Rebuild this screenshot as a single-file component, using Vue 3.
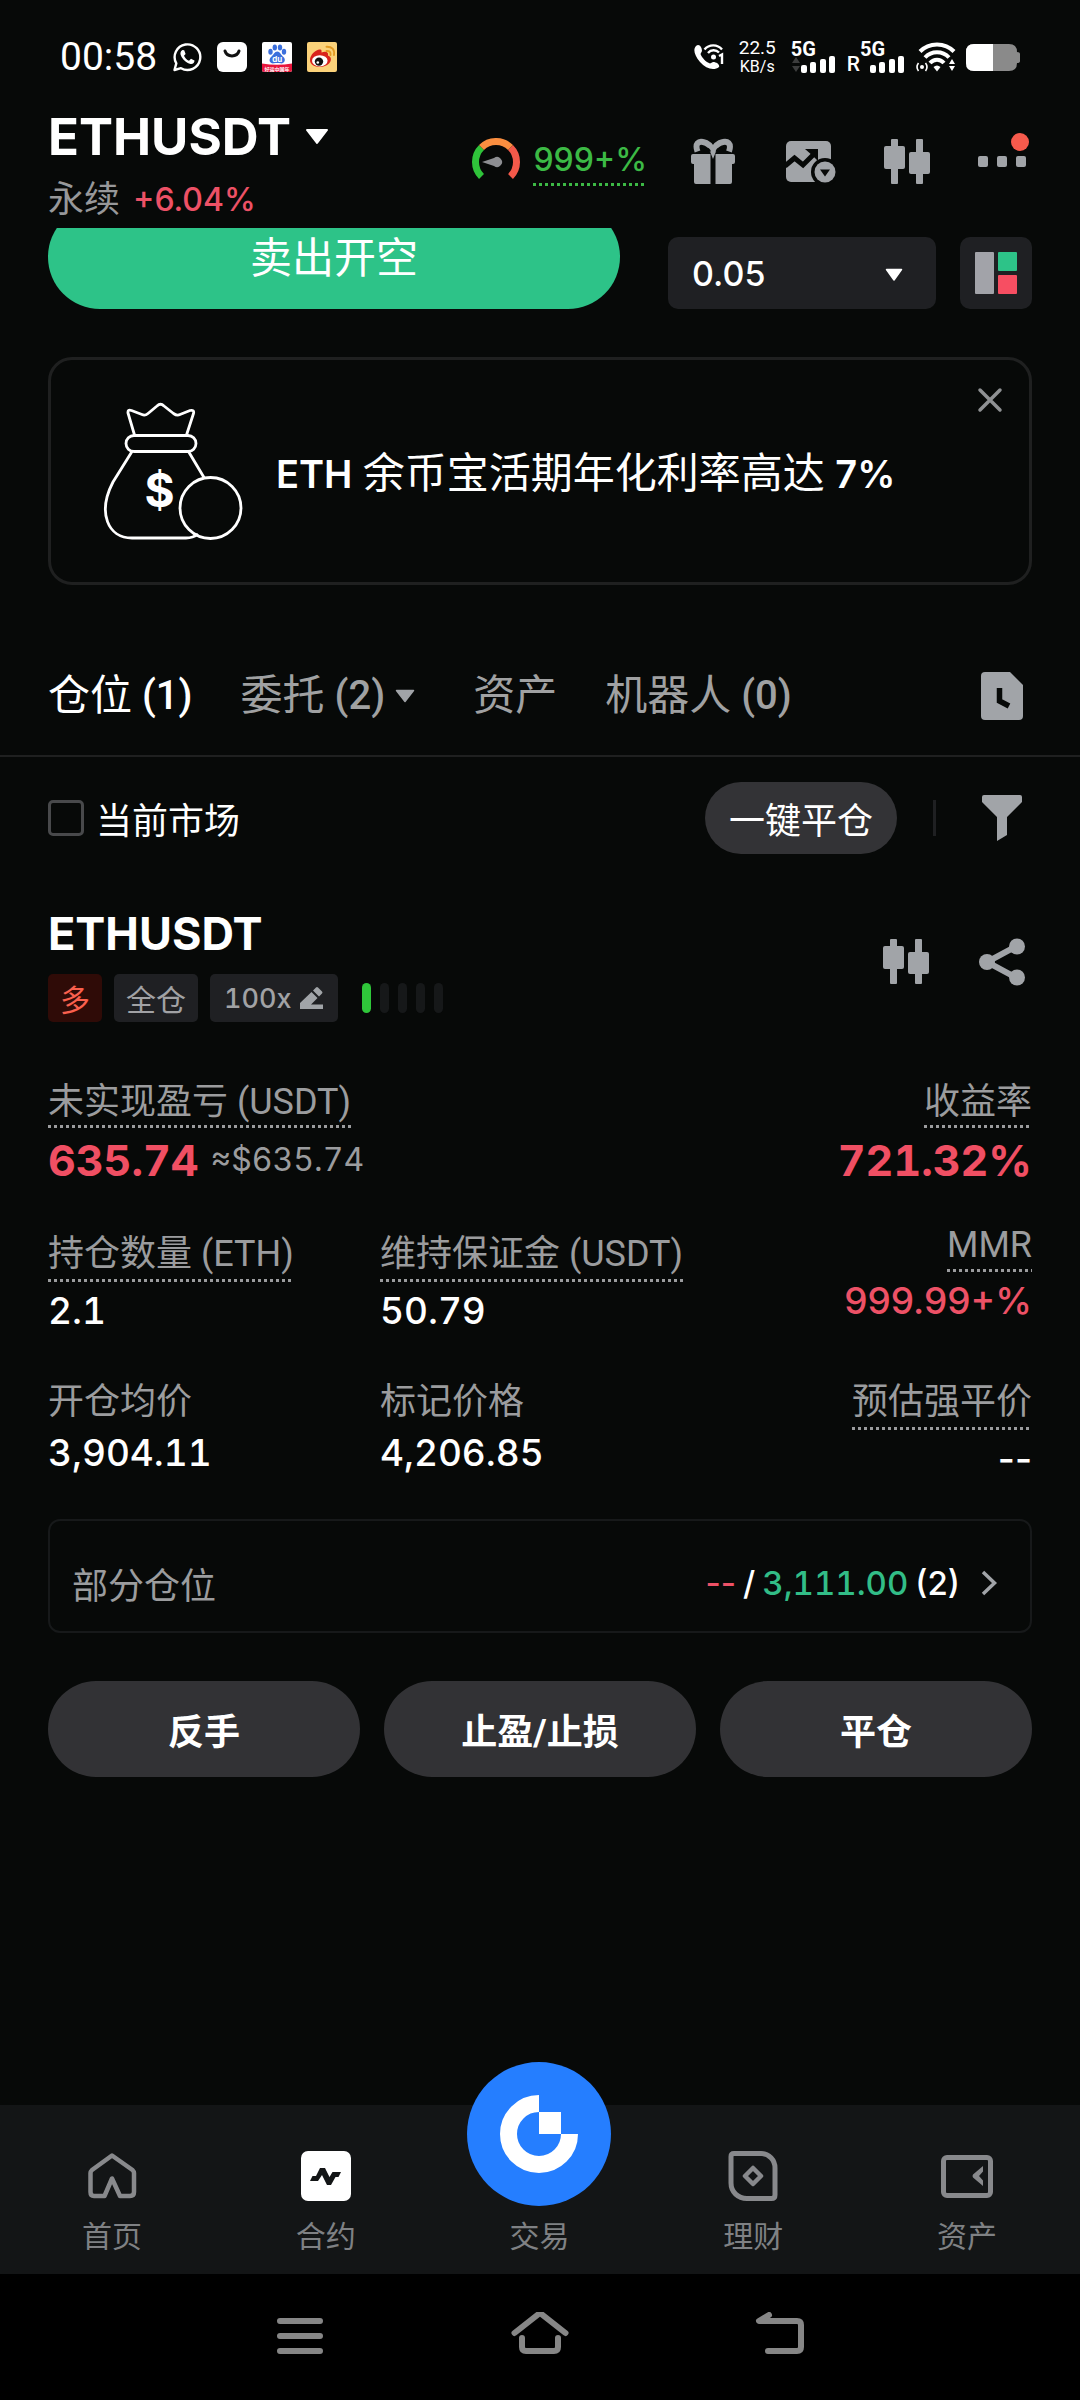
<template>
	<div class="page">
		<!-- 系统状态栏 -->
		<div class="status-bar">
			<div class="status-left">
				<span class="clock">00:58</span>
				<svg class="app-icon" viewBox="0 0 30 30">
					<path d="M2.5 28 L4.3 21.4 A12.8 12.8 0 1 1 9 26.2 Z" fill="none" stroke="#fff" stroke-width="2.4" stroke-linejoin="round" />
					<path d="M10.4 8 C8 9.4 7.8 12 9.6 15 C12 19 15.5 21.4 18.6 22 C21 22.3 22.6 20.6 22.5 18.6 L19 16.8 L17 18.8 C14.8 17.9 12.9 16 12 13.8 L13.6 12 L12.2 8.2 Z" fill="#fff" />
				</svg>
				<svg class="app-icon" viewBox="0 0 30 30">
					<rect width="30" height="30" rx="6" fill="#fff" />
					<path d="M8 9 C10 15.5 20 15.5 22 9" fill="none" stroke="#111" stroke-width="3" stroke-linecap="round" />
				</svg>
				<svg class="app-icon" viewBox="0 0 30 30">
					<rect width="30" height="30" rx="2" fill="#fff" />
					<g fill="#3b6fdc">
						<ellipse cx="8.5" cy="9.8" rx="2.2" ry="3" />
						<ellipse cx="12.8" cy="5.6" rx="2.2" ry="3" />
						<ellipse cx="18" cy="5.6" rx="2.2" ry="3" />
						<ellipse cx="22" cy="9.8" rx="2.2" ry="3" />
						<path d="M15.3 9.5 C18 9.5 19 13 21.5 15 C24.5 18 22 22 18.5 21.3 C16.5 20.9 14 20.9 12 21.3 C8 22 6 18 9 15 C11.5 13 12.5 9.5 15.3 9.5 Z" />
					</g>
					<text x="15.3" y="19.5" class="du">du</text>
					<path d="M0 21.5 Q15 24 30 21.5 V28 Q30 30 28 30 H2 Q0 30 0 28 Z" fill="#e8153c" />
					<text x="15" y="28.6" class="slogan">好运中国年</text>
				</svg>
				<svg class="app-icon" viewBox="0 0 30 30">
					<rect width="30" height="30" rx="2" fill="#fbd27a" />
					<path d="M3 18 C3 12 10 6.5 13.5 7.5 C15 8 14.5 10 14.5 10.5 C18 9 22 9.5 21 13.5 C25 15 24.5 19 22 21.5 C17 27 3 26 3 18 Z" fill="#d9231c" />
					<ellipse cx="12.8" cy="18.8" rx="7.8" ry="5.6" fill="#fff" />
					<circle cx="12" cy="19.6" r="4.2" fill="#111" />
					<circle cx="10.8" cy="20.5" r="1.3" fill="#fff" />
					<path d="M19.5 9 Q24 8.5 23.5 13 M19.5 4.8 Q28 4.5 27 13" fill="none" stroke="#e39a22" stroke-width="1.9" stroke-linecap="round" />
				</svg>
			</div>
			<div class="status-right">
				<svg width="30" height="28" viewBox="0 0 30 28">
					<path d="M2 3 C5 0 8 4 8 8 L6.5 11 C8 15 12 19 16 20.5 L19 19 C23 19 26 22 25 24 C20 28 12 26 6 19 C0 12 -1 6 2 3 Z" fill="#fff" />
					<g fill="none" stroke="#fff" stroke-width="2.4">
						<path d="M10.5 6.5 C15 1 23.5 1 28 6.5" />
						<path d="M14 10 C17 6.5 22 6.5 25 9.5" />
						<path d="M25 13 L28 11.5 V21" />
					</g>
					<circle cx="19.5" cy="14" r="2.5" fill="#fff" />
				</svg>
				<div class="net-speed">
					<span>22.5</span>
					<span class="unit">KB/s</span>
				</div>
				<div v-for="sim in sims" :key="sim.id" class="sim">
					<span v-if="sim.roaming" class="roaming">R</span>
					<div class="sim-signal">
						<span class="sim-type">5G</span>
						<svg width="46" height="17" viewBox="0 0 46 17">
							<path v-if="!sim.roaming" d="M1 7 L5 1 L9 7 Z M1 10 L5 16 L9 10 Z" fill="#3c3d3d" />
							<g fill="#fff">
								<rect x="10" y="9" width="6" height="8" rx="2" />
								<rect x="19" y="6" width="6" height="11" rx="2" />
								<rect x="29" y="3" width="6" height="14" rx="2" />
								<rect x="38" y="0" width="6" height="17" rx="2" />
							</g>
						</svg>
					</div>
				</div>
				<svg width="40" height="30" viewBox="0 0 40 30">
					<g fill="none" stroke="#fff" stroke-width="4">
						<path d="M4 9.5 C13 0 29 0 38 9.5" />
						<path d="M9 15.5 C15.5 8.5 26.5 8.5 33 15.5" />
						<path d="M14 21 C18 16.5 24 16.5 28 21" />
					</g>
					<path d="M17.5 25 Q21 22 24.5 25 L21 29.5 Z" fill="#fff" />
					<circle cx="6" cy="25" r="2" fill="#fff" />
					<path d="M2.5 21 Q-0.5 25 2.5 29 M9.5 21 Q12.5 25 9.5 29" fill="none" stroke="#fff" stroke-width="1.6" />
					<path d="M33 22 L36 17 L39 22 Z M33 24 L36 29 L39 24 Z" fill="#fff" />
				</svg>
				<svg width="54" height="27" viewBox="0 0 54 27">
					<path d="M8 0 H43 Q51 0 51 8 Q54 8 54 10 V17 Q54 19 51 19 Q51 27 43 27 H8 Q0 27 0 19 V8 Q0 0 8 0 Z" fill="#8a8a8a" />
					<path d="M27 0 H8 Q0 0 0 8 V19 Q0 27 8 27 H27 Z" fill="#fff" />
				</svg>
			</div>
		</div>

		<!-- 交易对标题 -->
		<header class="header">
			<div class="pair">
				<h1 class="pair-name">
					ETHUSDT
					<svg width="24" height="16" viewBox="0 0 24 16"><path d="M2 1 H22 L12 14 Z" fill="#fff" stroke="#fff" stroke-width="2" stroke-linejoin="round" /></svg>
				</h1>
				<div class="pair-sub">
					<span>永续</span>
					<span class="change">+6.04%</span>
				</div>
			</div>
			<div class="tools">
				<div class="risk">
					<svg width="50" height="48" viewBox="0 0 48 48">
						<g fill="none" stroke-width="7">
							<path d="M9.5 38.5 A20.5 20.5 0 0 1 9.5 9.5" stroke="#2fc33a" />
							<path d="M38.5 9.5 A20.5 20.5 0 0 1 38.5 38.5" stroke="#f4594a" />
							<path d="M9.5 9.5 A20.5 20.5 0 0 1 38.5 9.5" stroke="#f98e40" />
						</g>
						<path d="M10 24 L22 20 A5 5 0 1 1 22 28 Z" fill="#8d8e92" />
					</svg>
					<span class="risk-value dotted">999+%</span>
				</div>
				<button class="icon-btn" aria-label="奖励">
					<svg width="48" height="48" viewBox="0 0 48 48">
						<g fill="#a1a4a8">
							<path d="M4 16 H21.5 V46 H7 Q5 46 5 44 V26 H4 Q2 26 2 24 V18 Q2 16 4 16 Z" />
							<path d="M44 16 H26.5 V46 H41 Q43 46 43 44 V26 H44 Q46 26 46 24 V18 Q46 16 44 16 Z" />
						</g>
						<path d="M8.5 13.5 C5.5 5 10 3 14 4 C19 5 22 8 24 13 C26 8 29 5 34 4 C38 3 43 5 40 13.5" fill="none" stroke="#a1a4a8" stroke-width="6" />
						<path d="M14 13.5 Q19 6 22 13.5 M34.5 13.5 Q29 6 26.5 13.5" fill="#070908" />
					</svg>
				</button>
				<button class="icon-btn" aria-label="行情">
					<svg width="52" height="48" viewBox="0 0 52 48">
						<rect x="2" y="3" width="45" height="41" rx="5" fill="#a1a4a8" />
						<path d="M1 28 L10.5 20 L19 27 L32 14" fill="none" stroke="#070908" stroke-width="5" />
						<path d="M21 11 H34 V23 L29 18 Z" fill="#070908" />
						<circle cx="41" cy="34" r="14" fill="#070908" />
						<circle cx="41" cy="34" r="10.5" fill="#a1a4a8" />
						<path d="M36 31.5 H46 L41 38.5 Z" fill="#070908" />
					</svg>
				</button>
				<button class="icon-btn" aria-label="K线">
					<svg width="48" height="48" viewBox="0 0 48 48" fill="#a1a4a8">
						<rect x="8" y="1" width="7" height="45" rx="1" />
						<rect x="1" y="8" width="21" height="23" rx="2" />
						<rect x="33" y="1" width="7" height="45" rx="1" />
						<rect x="26" y="14" width="21" height="22" rx="2" />
					</svg>
				</button>
				<button class="icon-btn more" aria-label="更多">
					<svg width="48" height="48" viewBox="0 0 48 48" fill="#a1a4a8">
						<rect x="0" y="18" width="10" height="11" rx="2" />
						<rect x="19" y="18" width="10" height="11" rx="2" />
						<rect x="38" y="18" width="10" height="11" rx="2" />
					</svg>
					<i class="red-dot"></i>
				</button>
			</div>
		</header>

		<!-- 滚动到标题下方的下单区 -->
		<section class="order-area">
			<button class="sell-btn">卖出开空</button>
			<div class="depth">
				<div class="select-box">
					<select v-model="precision" class="precision" aria-label="深度精度">
						<option v-for="p in precisions" :key="p" :value="p">{{ p }}</option>
					</select>
					<svg class="select-caret" width="18" height="14" viewBox="0 0 18 14"><path d="M1.5 1.5 H16.5 L9 12 Z" fill="#fff" stroke="#fff" stroke-width="1.5" stroke-linejoin="round" /></svg>
				</div>
				<button class="layout-btn" aria-label="盘口布局">
					<svg width="42" height="42" viewBox="0 0 42 42">
						<rect x="0" y="0" width="19" height="42" rx="1" fill="#a2a3a9" />
						<rect x="23" y="0" width="19" height="19" rx="1" fill="#2dc388" />
						<rect x="23" y="23" width="19" height="19" rx="1" fill="#f74e62" />
					</svg>
				</button>
			</div>
		</section>

		<main class="content">
			<section class="banner">
				<svg width="144" height="140" viewBox="0 0 144 140">
					<g fill="none" stroke="#fff" stroke-width="2.8" stroke-linejoin="round">
						<path d="M34.5 34 L28 12 Q27.5 8 31.5 9.5 L42 13.5 Q45 15 48 12.5 L57 5 Q60.5 1.5 64 5 L73.5 12.5 Q77 15 80 13.5 L90 9.5 Q94.5 8.5 93.5 12.5 L86.5 34" />
						<rect x="26" y="34.5" width="70" height="16" rx="8" />
						<path d="M32 50.5 L13 81 C-3 112 8 137 32 137 H86 Q93 137 98 133 M88.5 50.5 L104 76.5" />
						<circle cx="110.5" cy="107" r="30.5" />
					</g>
					<text x="59.5" y="106" class="dollar">$</text>
				</svg>
				<p class="banner-text"><strong>ETH</strong> 余币宝活期年化利率高达 <strong>7%</strong></p>
				<button class="close" aria-label="关闭">
					<svg width="26" height="26" viewBox="0 0 26 26"><path d="M3 3 L23 23 M23 3 L3 23" stroke="#8f9193" stroke-width="3.5" stroke-linecap="round" /></svg>
				</button>
			</section>

			<nav class="tabs">
				<button
					v-for="tab in tabs"
					:key="tab.name"
					class="tab"
					:class="{ active: tab.name === activeTab }"
					@click="activeTab = tab.name">
					{{ tab.name }}
					<span v-if="tab.count !== undefined" class="count">({{ tab.count }})</span>
					<svg v-if="tab.menu" class="tab-caret" width="20" height="14" viewBox="0 0 20 14"><path d="M1.5 1.5 H18.5 L10 12.5 Z" fill="#a1a4a8" stroke="#a1a4a8" stroke-width="1.5" stroke-linejoin="round" /></svg>
				</button>
				<button class="icon-btn history" aria-label="历史记录">
					<svg width="42" height="48" viewBox="0 0 42 48">
						<path d="M4 0 H29 L42 13 V44 Q42 48 38 48 H4 Q0 48 0 44 V4 Q0 0 4 0 Z" fill="#a1a4a8" />
						<path d="M18.5 16 V29 L28 34" fill="none" stroke="#070908" stroke-width="5.5" />
					</svg>
				</button>
			</nav>

			<section class="filter-row">
				<label class="market-check">
					<input v-model="currentOnly" type="checkbox" />
					当前市场
				</label>
				<button class="close-all">一键平仓</button>
				<i class="split"></i>
				<button class="icon-btn" aria-label="筛选">
					<svg width="42" height="48" viewBox="0 0 42 48"><path d="M3 1 H39 Q41 1 41 3 V8 L26 23 V41 L16 47 V23 L1 8 V3 Q1 1 3 1 Z" fill="#a1a4a8" /></svg>
				</button>
			</section>

			<!-- 持仓卡片 -->
			<section class="position">
				<div class="position-head">
					<div>
						<h2 class="position-name">ETHUSDT</h2>
						<div class="tags">
							<span class="tag long">多</span>
							<span class="tag">全仓</span>
							<button class="tag leverage">
								100x
								<svg width="24" height="24" viewBox="0 0 24 24" fill="#a1a4a8"><path d="M0 23 V17 L11.5 6 L17.5 12 L11 18.5 H23 V23 Z M13 4.5 L16 1.5 Q17 0.5 18 1.5 L22 5.5 Q23 6.5 22 7.5 L19 10.5 Z" /></svg>
							</button>
							<div class="adl">
								<i v-for="n in 5" :key="n" :class="{ on: n <= adlLevel }"></i>
							</div>
						</div>
					</div>
					<div class="position-tools">
						<button class="icon-btn" aria-label="K线">
							<svg width="48" height="48" viewBox="0 0 48 48" fill="#a1a4a8">
								<rect x="8" y="1" width="7" height="45" rx="1" />
								<rect x="1" y="8" width="21" height="23" rx="2" />
								<rect x="33" y="1" width="7" height="45" rx="1" />
								<rect x="26" y="14" width="21" height="22" rx="2" />
							</svg>
						</button>
						<button class="icon-btn" aria-label="分享">
							<svg width="48" height="48" viewBox="0 0 48 48" fill="#a1a4a8">
								<path d="M39 8 L9 24 L39 40" fill="none" stroke="#a1a4a8" stroke-width="6" />
								<circle cx="39" cy="8.5" r="8" />
								<circle cx="9" cy="24" r="8" />
								<circle cx="39" cy="39.5" r="8" />
							</svg>
						</button>
					</div>
				</div>

				<div class="pnl">
					<div class="cell">
						<span class="label dotted">未实现盈亏 (USDT)</span>
						<div class="pnl-value"><b>635.74</b><span class="approx">≈$635.74</span></div>
					</div>
					<div class="cell right">
						<span class="label dotted">收益率</span>
						<div class="pnl-value"><b>721.32%</b></div>
					</div>
				</div>

				<div class="stats">
					<div
						v-for="(item, i) in stats"
						:key="item.label"
						class="cell"
						:class="{ right: i % 3 === 2 }">
						<span class="label" :class="{ dotted: item.dotted }">{{ item.label }}</span>
						<span class="value" :class="{ down: item.red }">{{ item.value }}</span>
					</div>
				</div>

				<button class="part">
					<span class="part-label">部分仓位</span>
					<span class="part-value">
						<span class="red">--</span>
						<span>/</span>
						<span class="green">3,111.00</span>
						<span>(2)</span>
					</span>
					<svg width="18" height="26" viewBox="0 0 18 26"><path d="M3 2 L14.5 13 L3 24" fill="none" stroke="#a1a4a8" stroke-width="3.5" /></svg>
				</button>

				<div class="actions">
					<button v-for="name in actions" :key="name">{{ name }}</button>
				</div>
			</section>
		</main>

		<!-- 底部导航 -->
		<nav class="bottom-nav">
			<a href="#home">
				<svg width="52" height="52" viewBox="0 0 52 52" fill="none" stroke="#88898c" stroke-width="4.5" stroke-linejoin="round">
					<path d="M26 5.5 L46.5 20 Q48 21.5 48 23 V42 Q48 46 44 46 H34 L26 28.5 L18.5 46 H8 Q4.5 46 4.5 42 V23 Q4.5 21.5 6 20 Z" />
				</svg>
				<span>首页</span>
			</a>
			<a href="#futures">
				<svg width="52" height="52" viewBox="0 0 52 52">
					<rect x="1" y="1" width="50" height="50" rx="7" fill="#fff" />
					<path d="M10 31 L12.5 26 H16 L20 18 H25 L29.5 27 L32.5 22 H41 L38.5 27 H35.5 L31 35 H27 L22 25 L18 31 Z" fill="#131516" />
				</svg>
				<span>合约</span>
			</a>
			<a href="#trade">
				<i class="trade-logo">
					<svg width="78" height="78" viewBox="0 0 78 78">
						<path d="M39 8.5 A30.5 30.5 0 1 0 69.5 39" fill="none" stroke="#fff" stroke-width="17" />
						<rect x="39" y="17" width="22" height="22" fill="#fff" />
					</svg>
				</i>
				<span>交易</span>
			</a>
			<a href="#earn">
				<svg width="52" height="52" viewBox="0 0 52 52" fill="none" stroke="#88898c" stroke-width="5">
					<path d="M7 3.5 H34 C42 3.5 48 10 48 18 V45 Q48 48.5 44.5 48.5 H20 C11 48.5 4 42 4 33 V6.5 Q4 3.5 7 3.5 Z" />
					<path d="M26 18 L34 26 L26 34 L18 26 Z" stroke-width="4.5" stroke-linejoin="round" />
				</svg>
				<span>理财</span>
			</a>
			<a href="#assets">
				<svg width="52" height="52" viewBox="0 0 52 52" fill="none" stroke="#88898c" stroke-width="5">
					<rect x="2.5" y="7.5" width="47" height="38" rx="3.5" />
					<path d="M42 16 V21.5 L38 26 L42 30.5 V36 L32 27.5 Q31 26 32 24.5 Z" fill="#88898c" stroke="none" />
				</svg>
				<span>资产</span>
			</a>
		</nav>

		<div class="system-nav">
			<button aria-label="最近任务">
				<svg width="60" height="48" viewBox="0 0 60 48"><path d="M10 9 H50 M10 24 H50 M10 39 H50" stroke="#868686" stroke-width="6" stroke-linecap="round" /></svg>
			</button>
			<button aria-label="主屏幕">
				<svg width="60" height="48" viewBox="0 0 60 48" fill="none" stroke="#868686" stroke-width="6" stroke-linecap="round" stroke-linejoin="round">
					<path d="M4.5 21 L30 1 L55.5 21" />
					<path d="M12 26 V35 Q12 39 16 39 H44 Q48 39 48 35 V26" />
				</svg>
			</button>
			<button aria-label="返回">
				<svg width="60" height="48" viewBox="0 0 60 48" fill="none" stroke="#868686" stroke-width="6" stroke-linecap="round" stroke-linejoin="round">
					<path d="M19 3 L9 9 H47 Q51 9 51 13 V35 Q51 39 47 39 H18" />
				</svg>
			</button>
		</div>
	</div>
</template>

<script setup>
	import { ref } from "vue";

	const sims = [
		{ id: 1, roaming: false },
		{ id: 2, roaming: true }
	];

	// 深度精度
	const precisions = ["0.05", "0.5", "5"];
	const precision = ref("0.05");

	const activeTab = ref("仓位");
	const tabs = [
		{ name: "仓位", count: 1 },
		{ name: "委托", count: 2, menu: true },
		{ name: "资产" },
		{ name: "机器人", count: 0 }
	];

	const currentOnly = ref(false);
	const adlLevel = 1;

	const stats = [
		{ label: "持仓数量 (ETH)", value: "2.1", dotted: true },
		{ label: "维持保证金 (USDT)", value: "50.79", dotted: true },
		{ label: "MMR", value: "999.99+%", dotted: true, red: true },
		{ label: "开仓均价", value: "3,904.11" },
		{ label: "标记价格", value: "4,206.85" },
		{ label: "预估强平价", value: "--", dotted: true }
	];

	const actions = ["反手", "止盈/止损", "平仓"];
</script>

<style>
	body {
		background: #070908;
	}
</style>

<style scoped>
	.page {
		display: flex;
		flex-direction: column;
		min-height: 100vh;
		background: #070908;
		color: #fff;
		font-family: Roboto, "Noto Sans CJK SC", sans-serif;
	}

	button,
	select {
		font: inherit;
		color: inherit;
		background: none;
		border: 0;
		padding: 0;
	}

	h1,
	h2,
	p {
		margin: 0;
	}

	svg {
		display: block;
		flex-shrink: 0;
	}

	/* 状态栏 */
	.status-bar {
		display: flex;
		justify-content: space-between;
		align-items: center;
		padding: 38px 60px 31px;
		height: 38px;
	}

	.status-left {
		display: flex;
		align-items: center;
		gap: 15px;
	}

	.clock {
		font-size: 39px;
		line-height: 38px;
	}

	.app-icon {
		width: 30px;
		height: 30px;
	}

	.du {
		font: 700 8px Inter, sans-serif;
		fill: #fff;
		text-anchor: middle;
	}

	.slogan {
		font: 700 5px "Noto Sans CJK SC", sans-serif;
		fill: #fff;
		text-anchor: middle;
	}

	.status-right {
		display: flex;
		align-items: center;
		gap: 10px;
	}

	.net-speed {
		display: flex;
		flex-direction: column;
		align-items: center;
		font-size: 19px;
		line-height: 19px;
		padding: 0 5px;
	}

	.unit {
		font-size: 16px;
	}

	.sim {
		display: flex;
		align-items: flex-end;
	}

	.sim-signal {
		width: 46px;
	}

	.sim-type {
		display: block;
		font-size: 20px;
		font-weight: 700;
		line-height: 14px;
	}

	.roaming {
		font-size: 21px;
		font-weight: 500;
		line-height: 17px;
	}

	/* 顶部 */
	.header {
		display: flex;
		justify-content: space-between;
		align-items: flex-start;
		padding: 0 54px 4px 48px;
	}

	.pair-name {
		display: flex;
		align-items: center;
		gap: 14px;
		font-family: Inter, sans-serif;
		font-size: 51px;
		font-weight: 700;
		line-height: 60px;
	}

	.pair-sub {
		display: flex;
		align-items: center;
		gap: 13px;
		margin-top: 9px;
		font-size: 36px;
		line-height: 48px;
		color: #97989a;
	}

	.change {
		font-family: Inter, sans-serif;
		font-size: 32px;
		font-weight: 500;
		color: #ed5166;
	}

	.tools {
		display: flex;
		align-items: center;
		gap: 47px;
		padding-top: 31px;
	}

	.risk {
		display: flex;
		align-items: center;
		gap: 12px;
		margin-right: -5px;
	}

	.risk-value {
		font-family: Inter, sans-serif;
		font-size: 32px;
		font-weight: 500;
		line-height: 42px;
		padding-bottom: 5px;
		color: #3cba45;
	}

	.dotted {
		background: repeating-linear-gradient(
				90deg,
				currentColor 0 3px,
				transparent 3px 6px
			)
			left bottom / 100% 3px no-repeat;
	}

	.icon-btn {
		display: block;
	}

	.more {
		position: relative;
	}

	.red-dot {
		position: absolute;
		top: -5px;
		right: -3px;
		width: 18px;
		height: 18px;
		border-radius: 50%;
		background: #f65a4c;
	}

	/* 下单区 */
	.order-area {
		display: flex;
		align-items: flex-end;
		gap: 48px;
		height: 81px;
		padding: 0 48px;
		overflow: hidden;
	}

	.sell-btn {
		flex: 572;
		height: 104px;
		padding-bottom: 6px;
		border-radius: 52px;
		background: #2dc388;
		font-size: 42px;
	}

	.depth {
		flex: 364;
		display: flex;
		gap: 24px;
	}

	.select-box {
		position: relative;
		flex: 1;
	}

	.precision {
		appearance: none;
		width: 100%;
		height: 72px;
		padding: 0 24px;
		border-radius: 10px;
		background: #1f2023;
		font-family: Inter, sans-serif;
		font-size: 34px;
		font-weight: 500;
	}

	.select-caret {
		position: absolute;
		right: 33px;
		top: 31px;
		pointer-events: none;
	}

	.layout-btn {
		display: flex;
		align-items: center;
		justify-content: center;
		width: 72px;
		height: 72px;
		border-radius: 10px;
		background: #1f2023;
	}

	.content {
		flex: 1;
		padding-bottom: 48px;
	}

	/* 活动横幅 */
	.banner {
		position: relative;
		display: flex;
		align-items: center;
		gap: 32px;
		margin: 48px 48px 0;
		padding: 41px 48px 41px 49px;
		border: 3px solid #1f2020;
		border-radius: 24px;
	}

	.banner-text {
		padding-top: 6px;
		font-size: 42px;
		line-height: 56px;
	}

	.banner-text strong {
		font-family: Inter, sans-serif;
		font-size: 38px;
		font-weight: 600;
	}

	.close {
		position: absolute;
		top: 27px;
		right: 26px;
	}

	/* 标签页 */
	.tabs {
		display: flex;
		align-items: center;
		gap: 48px;
		padding: 81px 57px 29px 48px;
		border-bottom: 2px solid #1f2020;
	}

	.tab {
		display: flex;
		align-items: center;
		gap: 10px;
		font-size: 42px;
		line-height: 60px;
		color: #a0a1a2;
	}

	.tab.active {
		color: #fff;
	}

	.tab .count {
		font-size: 40px;
		font-weight: 500;
	}

	.tab-caret {
		margin-right: 10px;
	}

	.history {
		margin-left: auto;
	}

	/* 筛选 */
	.filter-row {
		display: flex;
		align-items: center;
		gap: 36px;
		padding: 25px 57px 0 48px;
	}

	.market-check {
		display: flex;
		align-items: center;
		gap: 12px;
		margin-right: auto;
		font-size: 36px;
	}

	.market-check input {
		appearance: none;
		width: 36px;
		height: 36px;
		margin: 0;
		border: 3px solid #48494b;
		border-radius: 5px;
	}

	.market-check input:checked {
		background: #2dc388;
	}

	.close-all {
		height: 72px;
		padding: 0 24px;
		border-radius: 36px;
		background: #333336;
		font-size: 36px;
	}

	.split {
		width: 3px;
		height: 36px;
		margin-right: 9px;
		background: #1f2022;
	}

	/* 持仓 */
	.position {
		padding: 52px 48px 0;
	}

	.position-head {
		display: flex;
		justify-content: space-between;
	}

	.position-name {
		font-family: Inter, sans-serif;
		font-size: 45px;
		font-weight: 700;
		line-height: 56px;
	}

	.tags {
		display: flex;
		align-items: center;
		gap: 12px;
		margin-top: 12px;
	}

	.tag {
		display: flex;
		align-items: center;
		height: 48px;
		padding: 0 12px;
		border-radius: 5px;
		background: #1f2023;
		color: #a1a2a5;
		font-size: 30px;
	}

	.tag.long {
		background: #2f0b07;
		color: #f9604e;
	}

	.tag.leverage {
		gap: 8px;
		padding: 0 14px;
		font-family: Inter, sans-serif;
		font-size: 27px;
		font-weight: 500;
	}

	.adl {
		display: flex;
		gap: 9px;
		margin-left: 12px;
	}

	.adl i {
		width: 9px;
		height: 30px;
		border-radius: 5px;
		background: #161819;
	}

	.adl i.on {
		background: #2fc73a;
	}

	.position-tools {
		display: flex;
		align-items: flex-start;
		gap: 48px;
		padding: 32px 6px 0 0;
	}

	.cell {
		display: flex;
		flex-direction: column;
		align-items: flex-start;
		gap: 6px;
	}

	.cell.right {
		align-items: flex-end;
	}

	.label {
		font-size: 36px;
		color: #9b9c9e;
	}

	.label.dotted {
		padding-bottom: 6px;
	}

	.pnl {
		display: flex;
		justify-content: space-between;
		margin-top: 55px;
	}

	.pnl .cell {
		gap: 7px;
	}

	.pnl .label {
		line-height: 50px;
		padding-bottom: 1px;
	}

	.pnl-value {
		display: flex;
		align-items: center;
		gap: 12px;
		font-family: Inter, sans-serif;
		font-size: 43px;
		line-height: 50px;
		color: #f04f63;
	}

	.approx {
		font-size: 32px;
		color: #9b9c9e;
	}

	/* 数字等宽 */
	.tag.leverage,
	.pnl-value,
	.value,
	.green {
		font-variant-numeric: tabular-nums;
	}

	.stats {
		display: grid;
		grid-template-columns: 332fr 332fr 320fr;
		row-gap: 38px;
		margin-top: 39px;
	}

	.value {
		font-family: Inter, sans-serif;
		font-size: 37px;
		font-weight: 500;
		line-height: 46px;
	}

	.right .value {
		font-variant-numeric: normal;
	}

	.value.down {
		color: #ed5166;
	}

	.part {
		display: flex;
		align-items: center;
		width: 100%;
		height: 114px;
		margin-top: 37px;
		padding: 13px 32px 0 22px;
		border: 2px solid #17191a;
		border-radius: 12px;
	}

	.part-label {
		margin-right: auto;
		font-size: 36px;
		color: #9b9c9e;
	}

	.part-value {
		display: flex;
		gap: 7px;
		margin-right: 20px;
		font-family: Inter, sans-serif;
		font-size: 33px;
		font-weight: 500;
	}

	.red {
		color: #ed5166;
	}

	.green {
		color: #32bd87;
	}

	.actions {
		display: flex;
		gap: 24px;
		margin-top: 48px;
	}

	.actions button {
		flex: 1;
		height: 96px;
		border-radius: 48px;
		background: #323235;
		font-size: 36px;
		font-weight: 700;
	}

	/* 底部导航 */
	.bottom-nav {
		display: flex;
		padding: 45px 6px 15px 5px;
		background: #131516;
	}

	.bottom-nav a {
		position: relative;
		flex: 1;
		display: flex;
		flex-direction: column;
		align-items: center;
		justify-content: flex-end;
		gap: 13px;
		font-size: 30px;
		line-height: 44px;
		color: #7f8184;
		text-decoration: none;
	}

	.trade-logo {
		position: absolute;
		bottom: 53px;
		display: flex;
		align-items: center;
		justify-content: center;
		width: 144px;
		height: 144px;
		border-radius: 50%;
		background: #257eff;
	}

	.system-nav {
		display: flex;
		justify-content: center;
		gap: 180px;
		padding: 38px 0 40px;
		background: #000;
	}

	.dollar {
		font: 700 46px Inter, sans-serif;
		fill: #fff;
		text-anchor: middle;
	}
</style>
